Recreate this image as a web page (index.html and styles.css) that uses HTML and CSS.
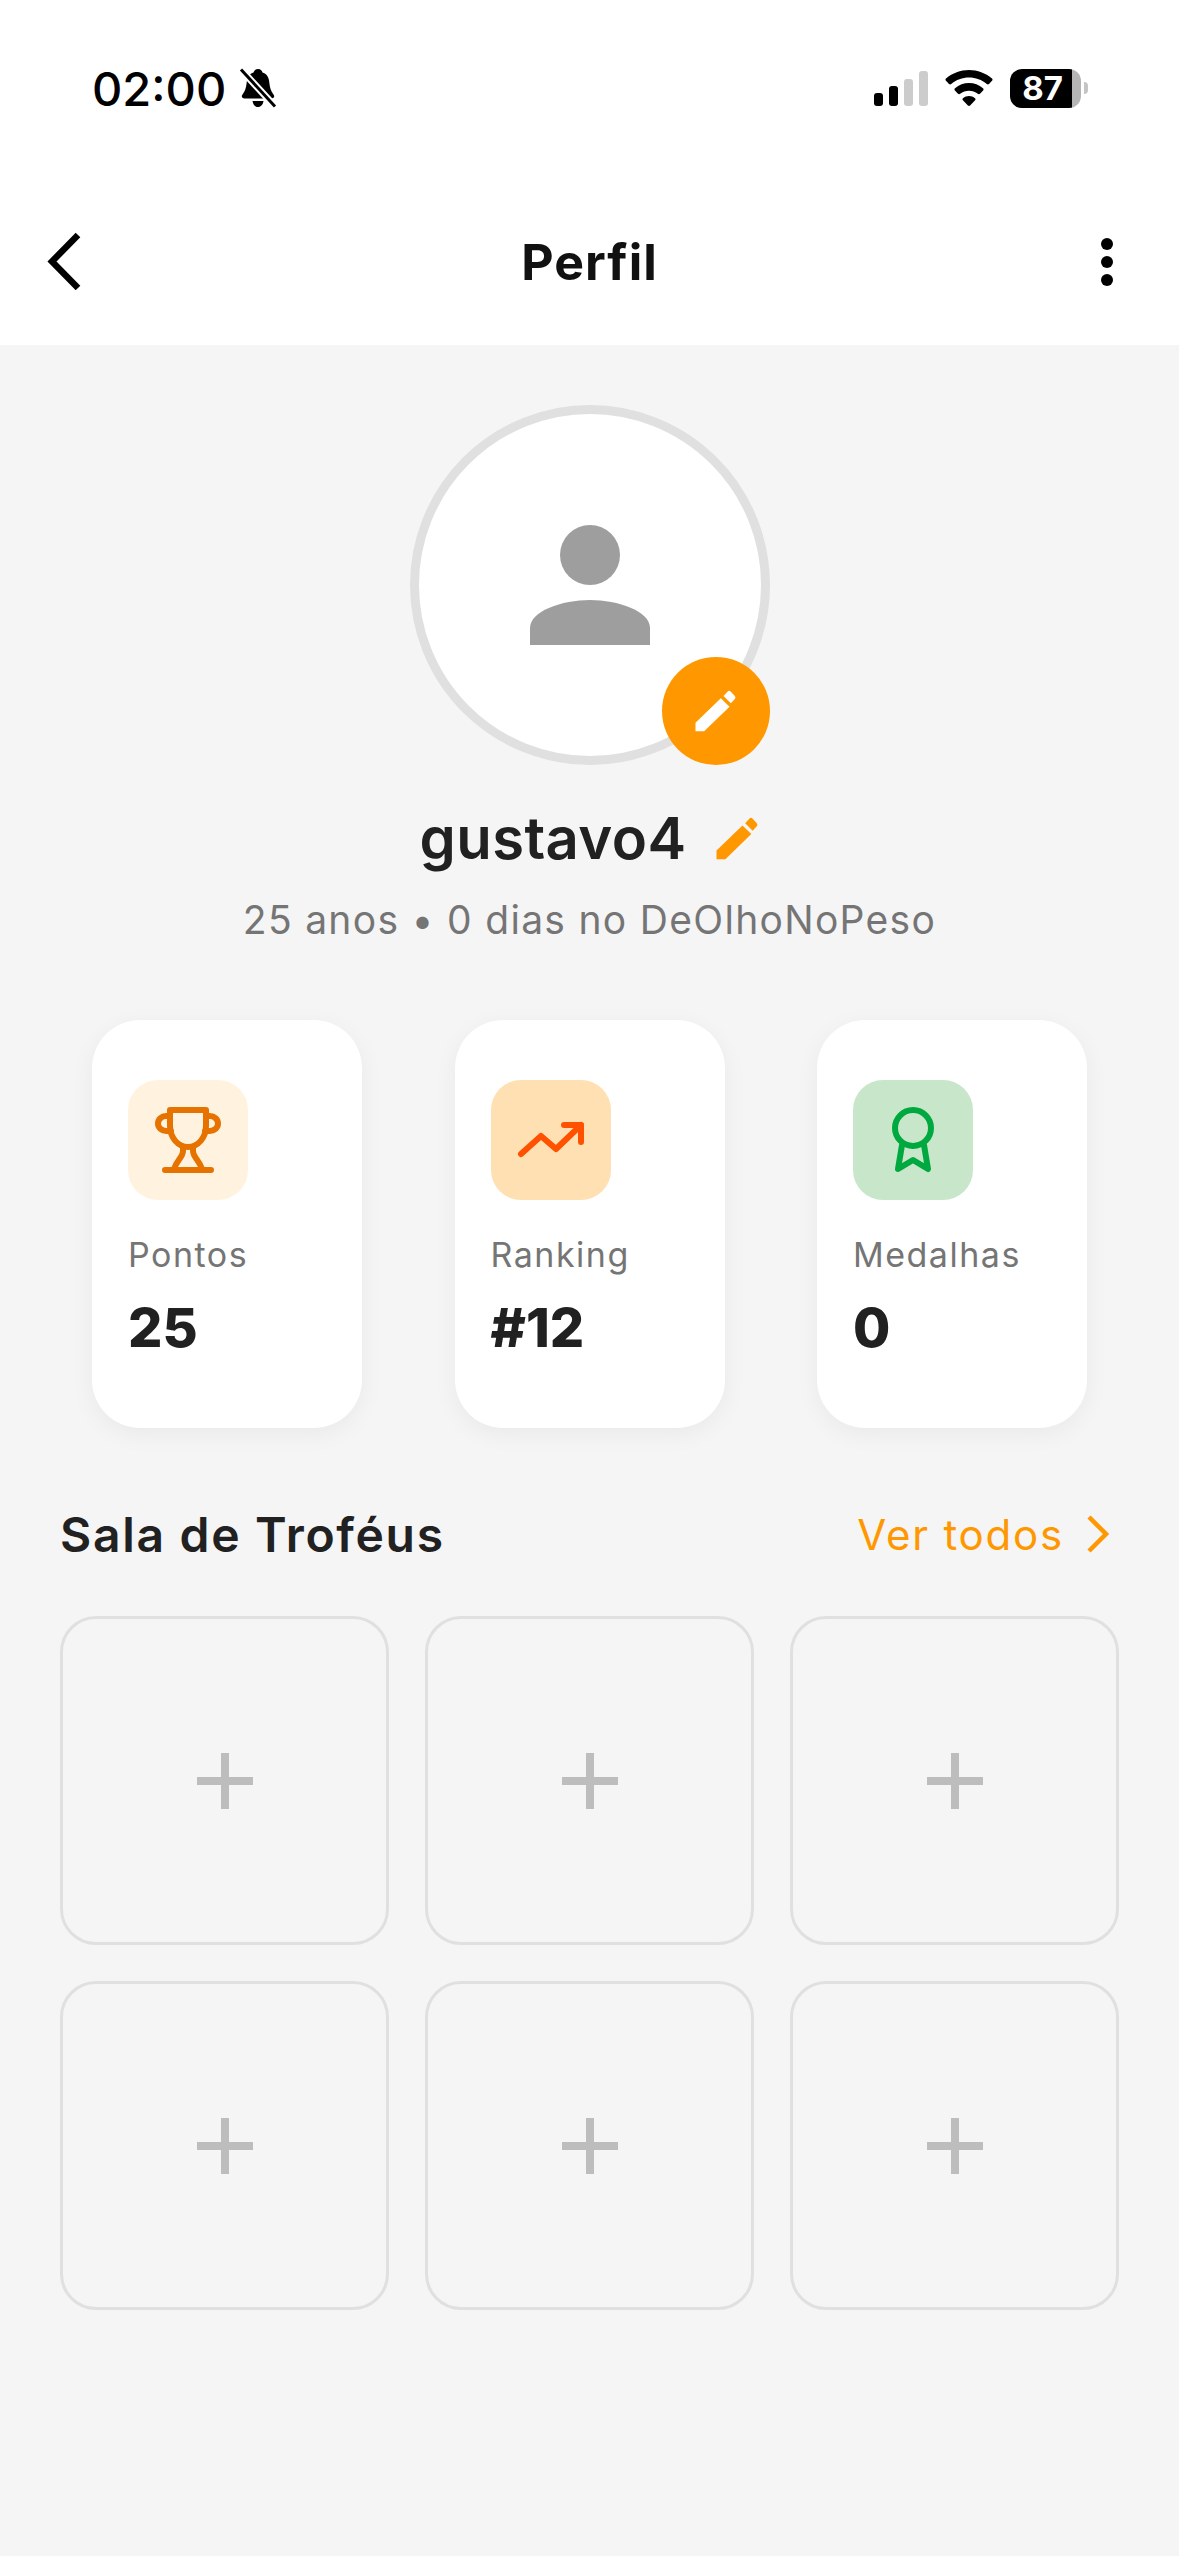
FILE: index.html
```html
<!DOCTYPE html>
<html lang="pt-BR">
<head>
    <meta charset="UTF-8">
    <title>Perfil</title>
    <link rel="stylesheet" href="styles.css">
</head>
<body>
    <div class="top">
        <div class="status-bar">
            <div class="status-left">
                <span class="time">02:00</span>
                <svg class="bell" viewBox="0 0 38 40" width="38" height="40">
                    <path d="M19 1c3 0 4 2 4.500 3.500C29 6 30 11 30.500 16c.4 4 1.500 7 4 10.500 1.500 2 .5 4-2 4H5.500c-2.500 0-3.500-2-2-4C6 23 7 20 7.500 16 8 11 9 6 14.500 4.500 15 3 16 1 19 1zM13.500 33h11c-.5 3.500-2.500 6-5.500 6s-5-2.500-5.500-6z" fill="#000"/>
                    <path d="M2 1.500 36 38.500" stroke="#fff" stroke-width="7" fill="none"/>
                    <path d="M2 1.500 36 38.500" stroke="#000" stroke-width="3" fill="none"/>
                </svg>
            </div>
            <div class="status-right">
                <div class="signal">
                    <span class="bar bar-1"></span>
                    <span class="bar bar-2"></span>
                    <span class="bar bar-3"></span>
                    <span class="bar bar-4"></span>
                </div>
                <svg class="wifi" viewBox="0 0 48 36" width="48" height="36">
                    <path d="M24 0c8.500 0 16.500 3 23 8.500c.7.6.7 1.500 0 2.200l-3 3.300c-.6.600-1.500.7-2.200.1C36.800 9.800 30.600 7.500 24 7.500S11.200 9.800 6.200 14.100c-.7.600-1.600.5-2.200-.1l-3-3.300c-.7-.7-.7-1.600 0-2.200C7.500 3 15.500 0 24 0z" fill="#000"/>
                    <path d="M24 13c5.200 0 10 1.800 14 5.200.7.600.7 1.500.1 2.200l-3.100 3.300c-.6.600-1.500.7-2.200.1-2.500-2-5.600-3.100-8.800-3.100s-6.300 1.100-8.800 3.100c-.7.600-1.600.5-2.200-.1L9.900 20.400c-.6-.7-.6-1.600.1-2.200C14 14.800 18.800 13 24 13z" fill="#000"/>
                    <path d="M24 26c2.200 0 4.300.8 6 2.200.7.6.7 1.500.1 2.100l-5 5.200c-.6.600-1.600.6-2.200 0l-5-5.200c-.6-.6-.6-1.500.1-2.100 1.700-1.400 3.800-2.200 6-2.200z" fill="#000"/>
                </svg>
                <div class="battery">
                    <div class="battery-body"><span class="battery-level">87</span></div>
                    <span class="battery-tip"></span>
                </div>
            </div>
        </div>
        <div class="nav-bar">
            <svg class="back" viewBox="0 0 36 60" width="36" height="60">
                <path d="M32 3 6 29.500 32 56" stroke="#000" stroke-width="6.500" fill="none"/>
            </svg>
            <h1 class="nav-title">Perfil</h1>
            <div class="more">
                <span class="dot"></span>
                <span class="dot"></span>
                <span class="dot"></span>
            </div>
        </div>
    </div>

    <div class="content">
        <div class="avatar">
            <svg class="avatar-person" viewBox="0 0 120 120" width="120" height="120">
                <circle cx="60" cy="30" r="30" fill="#9e9e9e"/>
                <path d="M0 120V103C0 86 32 75 60 75s60 11 60 28v17z" fill="#9e9e9e"/>
            </svg>
            <div class="avatar-edit">
                <svg viewBox="915 900 125 126" width="42" height="42">
                    <path d="M916 998 992 925 1018 950 942 1024H916z" fill="#fff"/>
                    <path d="M1000 918 1012 905Q1017 900 1022 905L1034 918Q1038 923 1034 927L1022 940z" fill="#fff"/>
                </svg>
            </div>
        </div>

        <div class="name-row">
            <span class="name">gustavo4</span>
            <svg class="name-edit" viewBox="915 900 125 126" width="43" height="43">
                <path d="M916 998 992 925 1018 950 942 1024H916z" fill="#ff9800"/>
                <path d="M1000 918 1012 905Q1017 900 1022 905L1034 918Q1038 923 1034 927L1022 940z" fill="#ff9800"/>
            </svg>
        </div>
        <p class="subtitle">25 anos • 0 dias no DeOlhoNoPeso</p>

        <div class="stats">
            <div class="stat-card">
                <div class="stat-icon stat-icon-points">
                    <svg viewBox="0 0 72 72" width="72" height="72" fill="none" stroke="#e67300" stroke-width="6" stroke-linecap="round" stroke-linejoin="round">
                        <path d="M18 6H54V22A18 21 0 0 1 18 22Z"/>
                        <path d="M18 12H14A8 7.500 0 0 0 14 27H19"/>
                        <path d="M54 12H58A8 7.500 0 0 1 58 27H53"/>
                        <path d="M31 44V47C31 53 25 56 22 65"/>
                        <path d="M41 44V47C41 53 47 56 50 65"/>
                        <path d="M13 66H59"/>
                    </svg>
                </div>
                <span class="stat-label">Pontos</span>
                <span class="stat-value">25</span>
            </div>
            <div class="stat-card">
                <div class="stat-icon stat-icon-ranking">
                    <svg viewBox="0 0 72 72" width="72" height="72" fill="none" stroke="#ff5100" stroke-width="6" stroke-linecap="round" stroke-linejoin="round">
                        <path d="M6 50 26 32 41 45 66 21"/>
                        <path d="M49 21H66V38"/>
                    </svg>
                </div>
                <span class="stat-label">Ranking</span>
                <span class="stat-value">#12</span>
            </div>
            <div class="stat-card">
                <div class="stat-icon stat-icon-medals">
                    <svg viewBox="0 0 72 72" width="72" height="72" fill="none" stroke="#00a93f" stroke-width="6" stroke-linecap="round" stroke-linejoin="round">
                        <circle cx="36" cy="24" r="18"/>
                        <path d="M25 41 21 65 36 56 51 65 47 41"/>
                    </svg>
                </div>
                <span class="stat-label">Medalhas</span>
                <span class="stat-value">0</span>
            </div>
        </div>

        <div class="section-head">
            <h2 class="section-title">Sala de Troféus</h2>
            <div class="see-all">
                <span>Ver todos</span>
                <svg viewBox="0 0 24 38" width="24" height="38">
                    <path d="M3 2 20 19 3 36" stroke="#ff9800" stroke-width="4.500" fill="none"/>
                </svg>
            </div>
        </div>

        <div class="trophies">
            <div class="trophy-slot"><span class="plus"></span></div>
            <div class="trophy-slot"><span class="plus"></span></div>
            <div class="trophy-slot"><span class="plus"></span></div>
            <div class="trophy-slot"><span class="plus"></span></div>
            <div class="trophy-slot"><span class="plus"></span></div>
            <div class="trophy-slot"><span class="plus"></span></div>
        </div>
    </div>
</body>
</html>
```

FILE: styles.css
```css
* {
    box-sizing: border-box;
}
body {
    margin: 0;
    width: 1179px;
    height: 2556px;
    overflow: hidden;
    background: #f5f5f5;
    font-family: 'Inter', 'Liberation Sans', sans-serif;
    color: #212121;
}
h1, h2, p {
    margin: 0;
}
.top {
    background: #fff;
    height: 345px;
}
.status-bar {
    display: flex;
    justify-content: space-between;
    align-items: center;
    height: 176px;
    padding: 0 91px 0 92px;
}
.status-left {
    display: flex;
    align-items: center;
    gap: 13px;
}
.time {
    font-size: 47px;
    font-weight: 500;
    color: #000;
}
.status-right {
    display: flex;
    align-items: center;
    gap: 17px;
}
.signal {
    display: flex;
    align-items: flex-end;
    gap: 6px;
    height: 35px;
}
.bar {
    width: 9px;
    border-radius: 3px;
    background: #000;
}
.bar-1 { height: 13px; }
.bar-2 { height: 20px; }
.bar-3 { height: 27px; background: #ccc; }
.bar-4 { height: 35px; background: #ccc; }
.battery {
    display: flex;
    align-items: center;
    gap: 3px;
}
.battery-body {
    width: 71px;
    height: 39px;
    border-radius: 12px;
    background: linear-gradient(90deg, #000 87%, #b5b5b5 87%);
    padding-left: 5px;
    line-height: 39px;
}
.battery-level {
    display: block;
    width: 55px;
    text-align: center;
    color: #fff;
    font-size: 33px;
    font-weight: 700;
}
.battery-tip {
    width: 4px;
    height: 12px;
    border-radius: 0 6px 6px 0;
    background: #c4c4c4;
}
.nav-bar {
    display: flex;
    justify-content: space-between;
    align-items: center;
    height: 169px;
    padding: 3px 66px 0 46px;
}
.nav-bar .back {
    flex: none;
}
.nav-title {
    margin-right: 4px;
    font-size: 50px;
    font-weight: 700;
    letter-spacing: 1px;
    color: #111;
}
.more {
    display: flex;
    flex-direction: column;
    gap: 6px;
}
.dot {
    width: 12px;
    height: 12px;
    border-radius: 50%;
    background: #000;
}
.content {
    padding: 60px 60px 0;
}
.avatar {
    position: relative;
    display: flex;
    align-items: center;
    justify-content: center;
    width: 360px;
    height: 360px;
    margin: 0 auto;
    border: 9px solid #e0e0e0;
    border-radius: 50%;
    background: #fff;
}
.avatar-edit {
    position: absolute;
    right: -9px;
    bottom: -9px;
    display: flex;
    align-items: center;
    justify-content: center;
    width: 108px;
    height: 108px;
    border-radius: 50%;
    background: #ff9800;
}
.name-row {
    display: flex;
    justify-content: center;
    align-items: center;
    gap: 30px;
    margin-top: 38px;
    height: 70px;
}
.name {
    font-size: 58px;
    font-weight: 600;
    letter-spacing: 0.4px;
}
.subtitle {
    margin-top: 23px;
    text-align: center;
    font-size: 39px;
    letter-spacing: 1.3px;
    color: #757575;
}
.stats {
    display: flex;
    justify-content: space-between;
    margin: 77px 32px 0;
}
.stat-card {
    display: flex;
    flex-direction: column;
    align-items: flex-start;
    width: 270px;
    height: 408px;
    padding: 60px 36px 0;
    border-radius: 48px;
    background: #fff;
    box-shadow: 0 6px 24px rgba(0,0,0,0.05);
}
.stat-icon {
    display: flex;
    align-items: center;
    justify-content: center;
    width: 120px;
    height: 120px;
    border-radius: 30px;
}
.stat-icon-points { background: #fff3e0; }
.stat-icon-ranking { background: #ffe0b2; }
.stat-icon-medals { background: #c8e6c9; }
.stat-label {
    margin-top: 34px;
    font-size: 34px;
    letter-spacing: 1.5px;
    color: #757575;
}
.stat-value {
    margin-top: 20px;
    font-size: 54px;
    font-weight: 800;
}
.section-head {
    display: flex;
    justify-content: space-between;
    align-items: center;
    margin-top: 71px;
    height: 70px;
}
.section-title {
    font-size: 48px;
    font-weight: 600;
    letter-spacing: 1.7px;
}
.see-all {
    display: flex;
    align-items: center;
    gap: 22px;
    padding-right: 9px;
    font-size: 42px;
    letter-spacing: 1.8px;
    color: #ff9800;
}
.trophies {
    display: grid;
    grid-template-columns: repeat(3, 329px);
    justify-content: space-between;
    row-gap: 36px;
    margin-top: 47px;
}
.trophy-slot {
    display: flex;
    align-items: center;
    justify-content: center;
    height: 329px;
    border: 3px solid #e0e0e0;
    border-radius: 36px;
}
.plus {
    position: relative;
    width: 56px;
    height: 8px;
    background: #bdbdbd;
}
.plus::after {
    content: '';
    position: absolute;
    left: 24px;
    top: -24px;
    width: 8px;
    height: 56px;
    background: #bdbdbd;
}
```
